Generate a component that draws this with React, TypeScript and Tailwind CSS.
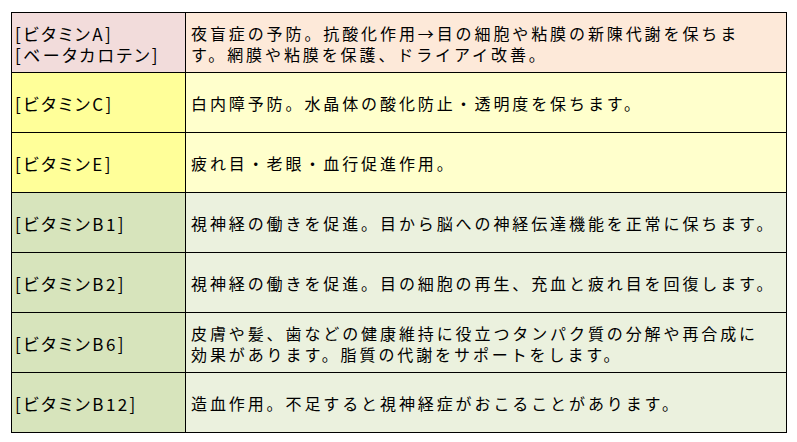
const rows = [
  {
    name: ['[ビタミンA]', '[ベータカロテン]'],
    desc: ['夜盲症の予防。抗酸化作用→目の細胞や粘膜の新陳代謝を保ちま', 'す。網膜や粘膜を保護、ドライアイ改善。'],
    left: 'bg-[#f2dcdb]',
    right: 'bg-[#fde9d9]',
  },
  { name: ['[ビタミンC]'], desc: ['白内障予防。水晶体の酸化防止・透明度を保ちます。'], left: 'bg-[#ffff99]', right: 'bg-[#ffffcc]' },
  { name: ['[ビタミンE]'], desc: ['疲れ目・老眼・血行促進作用。'], left: 'bg-[#ffff99]', right: 'bg-[#ffffcc]' },
  { name: ['[ビタミンB1]'], desc: ['視神経の働きを促進。目から脳への神経伝達機能を正常に保ちます。'], left: 'bg-[#d7e4bc]', right: 'bg-[#ebf1de]' },
  { name: ['[ビタミンB2]'], desc: ['視神経の働きを促進。目の細胞の再生、充血と疲れ目を回復します。'], left: 'bg-[#d7e4bc]', right: 'bg-[#ebf1de]' },
  {
    name: ['[ビタミンB6]'],
    desc: ['皮膚や髪、歯などの健康維持に役立つタンパク質の分解や再合成に', '効果があります。脂質の代謝をサポートをします。'],
    left: 'bg-[#d7e4bc]',
    right: 'bg-[#ebf1de]',
  },
  { name: ['[ビタミンB12]'], desc: ['造血作用。不足すると視神経症がおこることがあります。'], left: 'bg-[#d7e4bc]', right: 'bg-[#ebf1de]' },
];

export default function App() {
  return (
    <div className="w-[797px] h-[442px] bg-white pl-[11px] pt-[12px] font-['Noto_Sans_CJK_JP',sans-serif] text-black">
      <table className="border-collapse w-[776px]">
        <tbody>
          {rows.map((r, i) => (
            <tr key={i} className="h-[60px]">
              <td className={`${r.left} border border-black w-[174px] pl-[3px] pt-[2px] align-middle text-[17px] leading-[21px] [font-feature-settings:'palt'] tracking-[2.4px]`}>
                {r.name.map((l, j) => (
                  <div key={j} className="whitespace-nowrap">{l}</div>
                ))}
              </td>
              <td className={`${r.right} border border-black pl-[5px] pt-[2px] align-middle text-[16px] leading-[21px] tracking-[2.9px]`}>
                {r.desc.map((l, j) => (
                  <div key={j} className="whitespace-nowrap">{l}</div>
                ))}
              </td>
            </tr>
          ))}
        </tbody>
      </table>
    </div>
  );
}
